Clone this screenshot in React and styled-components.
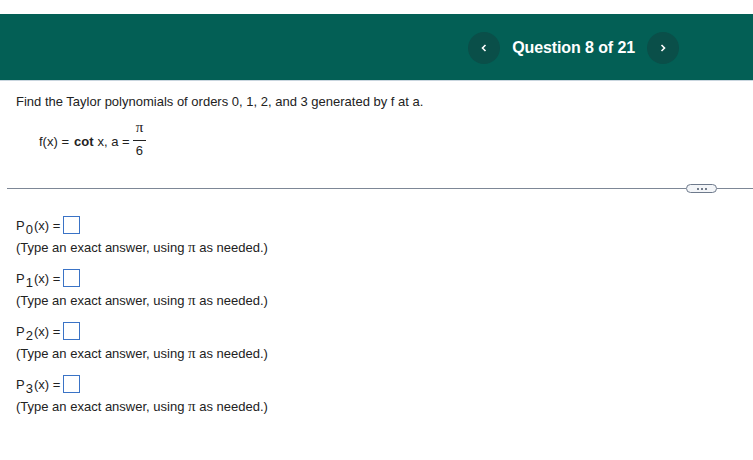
import styled, { createGlobalStyle } from "styled-components";

const GlobalStyle = createGlobalStyle`
  body {
    margin: 0;
    background: #ffffff;
    font-family: "Liberation Sans", Arial, sans-serif;
    color: #222222;
  }
`;

const Page = styled.div`
  padding-top: 14px;
  width: 753px;
  height: 446px;
`;

const Header = styled.div`
  height: 66px;
  background: #035f55;
  border-bottom: 1px solid #c9d6df;
  display: flex;
  align-items: center;
  justify-content: flex-end;
  padding-right: 74px;
`;

const Nav = styled.div`
  display: flex;
  align-items: center;
  gap: 12px;
  margin-top: 2px;
`;

const NavButton = styled.button`
  width: 32px;
  height: 32px;
  border-radius: 50%;
  border: none;
  background: #0a4f49;
  color: #ffffff;
  display: flex;
  align-items: center;
  justify-content: center;
  padding: 0;
`;

const NavTitle = styled.span`
  color: #ffffff;
  font-weight: bold;
  font-size: 16px;
  letter-spacing: -0.1px;
`;

const Content = styled.div`
  padding: 13px 0 0 16px;
  font-size: 13px;
  color: #222222;
`;

const Prompt = styled.p`
  margin: 0;
  line-height: 16px;
`;

const Formula = styled.div`
  display: flex;
  align-items: center;
  margin: 9px 0 0 23px;
  height: 44px;
`;

const Bold = styled.span`
  font-weight: bold;
  margin: 0 4px 0 5px;
`;

const Fraction = styled.span`
  display: inline-flex;
  flex-direction: column;
  align-items: center;
  margin: 0 0 5px 3px;
`;

const Numer = styled.span`
  font-family: "Liberation Serif", serif;
  font-size: 15px;
  line-height: 14px;
  padding: 0 3px 6px;
  border-bottom: 1px solid #222;
`;

const Denom = styled.span`
  line-height: 14px;
  padding-top: 3px;
`;

const Divider = styled.div`
  display: flex;
  align-items: center;
  margin: 21px 0 0 -9px;
`;

const Line = styled.div`
  height: 1px;
  background: #7d8796;
  flex: ${(p) => (p.$grow ? 1 : "none")};
  width: ${(p) => (p.$grow ? "auto" : "36px")};
`;

const Pill = styled.div`
  width: 29px;
  height: 7px;
  border: 1px solid #6e7a8c;
  border-radius: 5px;
  background: #f3f5f8;
  display: flex;
  align-items: center;
  justify-content: center;
  gap: 2px;
`;

const Dot = styled.span`
  width: 2px;
  height: 2px;
  background: #4a5568;
  border-radius: 50%;
`;

const Answers = styled.div`
  margin-top: 23px;
  display: flex;
  flex-direction: column;
  gap: 14px;
`;

const Answer = styled.div`
  display: flex;
  flex-direction: column;
  gap: 6px;
`;

const AnswerRow = styled.div`
  display: flex;
  align-items: center;
  height: 18px;
`;

const Sub = styled.span`
  font-size: 13px;
  position: relative;
  top: 4px;
  margin: 0 1px;
`;

const InputBox = styled.span`
  display: inline-block;
  width: 15px;
  height: 16px;
  border: 1px solid #3a73c6;
  margin-left: 3px;
`;

const Hint = styled.div`
  line-height: 15px;
`;

const Pi = styled.span`
  font-family: "Liberation Serif", serif;
  font-size: 15px;
`;

const Chevron = ({ dir }) => (
  <svg width="8" height="10" viewBox="0 0 8 10">
    <path
      d={dir === "left" ? "M5.5 2 L2.5 5 L5.5 8" : "M2.5 2 L5.5 5 L2.5 8"}
      fill="none"
      stroke="#ffffff"
      strokeWidth="1.6"
    />
  </svg>
);

const orders = [0, 1, 2, 3];

export default function App() {
  return (
    <Page>
      <GlobalStyle />
      <Header>
        <Nav>
          <NavButton aria-label="previous">
            <Chevron dir="left" />
          </NavButton>
          <NavTitle>Question 8 of 21</NavTitle>
          <NavButton aria-label="next">
            <Chevron dir="right" />
          </NavButton>
        </Nav>
      </Header>
      <Content>
        <Prompt>
          Find the Taylor polynomials of orders 0, 1, 2, and 3 generated by f at a.
        </Prompt>
        <Formula>
          f(x) = <Bold>cot</Bold> x, a =
          <Fraction>
            <Numer>π</Numer>
            <Denom>6</Denom>
          </Fraction>
        </Formula>
        <Divider>
          <Line $grow />
          <Pill>
            <Dot />
            <Dot />
            <Dot />
          </Pill>
          <Line />
        </Divider>
        <Answers>
          {orders.map((n) => (
            <Answer key={n}>
              <AnswerRow>
                P<Sub>{n}</Sub>(x) =<InputBox />
              </AnswerRow>
              <Hint>
                (Type an exact answer, using <Pi>π</Pi> as needed.)
              </Hint>
            </Answer>
          ))}
        </Answers>
      </Content>
    </Page>
  );
}
